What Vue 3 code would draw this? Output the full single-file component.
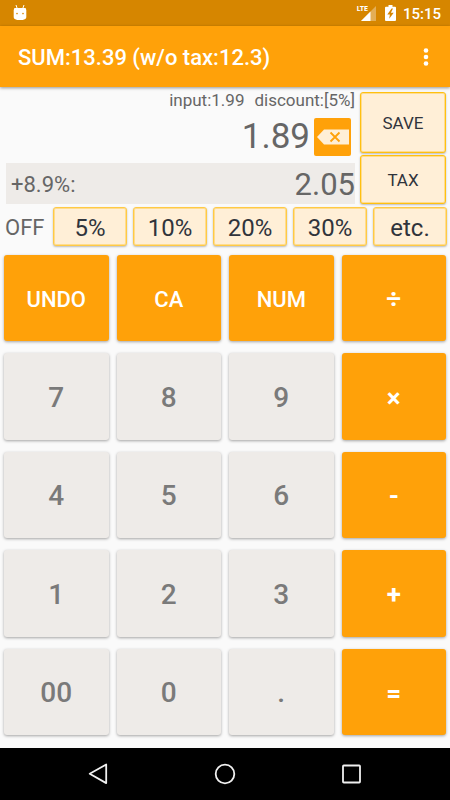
<script setup>
const discounts = ['5%', '10%', '20%', '30%', 'etc.']
const keys = [
  { label: 'UNDO', kind: 'command' },
  { label: 'CA', kind: 'command' },
  { label: 'NUM', kind: 'command' },
  { label: '÷', kind: 'operator' },
  { label: '7', kind: 'digit' },
  { label: '8', kind: 'digit' },
  { label: '9', kind: 'digit' },
  { label: '×', kind: 'operator' },
  { label: '4', kind: 'digit' },
  { label: '5', kind: 'digit' },
  { label: '6', kind: 'digit' },
  { label: '-', kind: 'operator' },
  { label: '1', kind: 'digit' },
  { label: '2', kind: 'digit' },
  { label: '3', kind: 'digit' },
  { label: '+', kind: 'operator' },
  { label: '00', kind: 'digit' },
  { label: '0', kind: 'digit' },
  { label: '.', kind: 'digit' },
  { label: '=', kind: 'operator' }
]
</script>

<template>
  <div class="screen">
    <div class="status">
      <svg class="android" width="14" height="17" viewBox="0 0 14 17">
        <path d="M3 1l1.2 3.4M11 1L9.8 4.4" stroke="#fff" stroke-width="1" fill="none" />
        <path d="M1.4 4h11.2l.7 2v7.2Q13.300 16 7 16T.7 13.200V6z" fill="#fff" />
        <circle cx="4" cy="9.600" r=".8" fill="#d68600" />
        <circle cx="10" cy="9.600" r=".8" fill="#d68600" />
      </svg>
      <div class="indicators">
        <div class="network">
          <span class="lte">LTE</span>
          <svg width="15" height="15" viewBox="0 0 15 15">
            <path d="M15 0v15H0z" fill="#e3ae56" />
            <path d="M9.500 5.500V15H0z" fill="#fff" />
          </svg>
        </div>
        <svg width="11" height="16" viewBox="0 0 11 16">
          <path d="M3.500 0h4v1.700H10q1 0 1 1V15q0 1-1 1H1q-1 0-1-1V2.700q0-1 1-1h2.500z" fill="#fff" />
          <path d="M6.600 3.600L2.300 9.400h2.600L4.200 13.800l4.500-6H5.900L8 3.600z" fill="#d68600" />
        </svg>
        <span class="clock">15:15</span>
      </div>
    </div>

    <header class="appbar">
      <h1>SUM:13.39 (w/o tax:12.3)</h1>
      <button class="more" aria-label="More options">
        <svg width="6" height="20" viewBox="0 0 6 20" fill="#fff">
          <circle cx="3" cy="3.500" r="2.300" />
          <circle cx="3" cy="10" r="2.300" />
          <circle cx="3" cy="16.500" r="2.300" />
        </svg>
      </button>
    </header>

    <main>
      <section class="display">
        <div class="readout">
          <div class="note"><span>input:1.99</span><span>discount:[5%]</span></div>
          <div class="entry">
            <output>1.89</output>
            <button class="erase" aria-label="Backspace">
              <svg width="32" height="16" viewBox="0 0 32 16">
                <path d="M0 8L7 .5h25v15H7z" fill="#ffefd6" />
                <path d="M13.500 3.500l9 9M22.500 3.500l-9 9" stroke="#ffa109" stroke-width="1.800" />
              </svg>
            </button>
          </div>
          <div class="taxed">
            <span class="rate">+8.9%:</span>
            <output>2.05</output>
          </div>
        </div>
        <div class="actions">
          <button class="pale save">SAVE</button>
          <button class="pale tax">TAX</button>
        </div>
      </section>

      <section class="discounts">
        <span class="off">OFF</span>
        <button v-for="d in discounts" :key="d" class="pale">{{ d }}</button>
      </section>

      <section class="keypad">
        <button v-for="k in keys" :key="k.label" class="key" :class="k.kind">{{ k.label }}</button>
      </section>
    </main>

    <nav>
      <button aria-label="Back">
        <svg width="22" height="22" viewBox="0 0 22 22">
          <path d="M19.200 1.500v18.600L2.700 10.800z" />
        </svg>
      </button>
      <button aria-label="Home">
        <svg width="22" height="22" viewBox="0 0 22 22">
          <circle cx="11" cy="11" r="9.300" />
        </svg>
      </button>
      <button aria-label="Recent apps">
        <svg width="22" height="22" viewBox="0 0 22 22">
          <rect x="2" y="2.500" width="17" height="17" rx=".8" />
        </svg>
      </button>
    </nav>
  </div>
</template>

<style>
body {
  margin: 0;
  background: #fafafa;
}
</style>

<style scoped>
.screen {
  display: flex;
  flex-direction: column;
  min-height: 100vh;
  background: #fafafa;
  color: #666;
  font-family: Roboto, "Liberation Sans", sans-serif;
}

button {
  margin: 0;
  padding: 0;
  border: 0;
  background: none;
  font-family: inherit;
  cursor: pointer;
}

svg {
  display: block;
}

.status {
  display: flex;
  align-items: center;
  justify-content: space-between;
  height: 26px;
  padding: 0 9px 0 13px;
  background: #d68600;
  color: #fff;
}

.android {
  margin-bottom: 2px;
}

.indicators {
  display: flex;
  align-items: center;
  gap: 9px;
}

.network {
  position: relative;
}

.lte {
  position: absolute;
  top: -1px;
  right: 8px;
  background: #d68600;
  font-family: "Roboto Condensed", "Liberation Sans Narrow", Roboto, sans-serif;
  font-size: 8px;
  line-height: 8px;
  font-weight: 700;
}

.clock {
  margin-left: -2px;
  padding-top: 2px;
  font-size: 15px;
  line-height: 24px;
  font-weight: 500;
}

.appbar {
  display: flex;
  align-items: center;
  justify-content: space-between;
  height: 61px;
  padding: 0 21px 0 18px;
  background: #ffa109;
  box-shadow: 0 1px 3px rgba(0, 0, 0, 0.4);
}

h1 {
  margin: 2px 0 0;
  color: #fff;
  font-size: 22px;
  line-height: 28px;
  font-weight: 500;
}

main {
  display: flex;
  flex: 1;
  flex-direction: column;
}

.display {
  display: flex;
  gap: 5px;
  padding: 4px 4px 0 6px;
}

.readout {
  flex: 1;
}

.note {
  display: flex;
  justify-content: flex-end;
  gap: 10px;
  font-size: 17px;
  line-height: 19px;
}

.entry {
  display: flex;
  align-items: center;
  justify-content: flex-end;
  gap: 4px;
  height: 53px;
  padding-right: 4px;
  font-size: 35px;
}

.erase {
  display: grid;
  place-items: center;
  width: 37px;
  height: 38px;
  border-radius: 2px;
  background: #ffa109;
}

.taxed {
  display: flex;
  align-items: center;
  justify-content: space-between;
  height: 39px;
  padding: 2px 0 0 5px;
  background: #eeebe8;
  font-size: 31px;
}

.rate {
  font-size: 22px;
}

.actions {
  display: flex;
  flex-direction: column;
  gap: 2px;
  width: 86px;
  padding-top: 1px;
}

.pale {
  border: 1px solid #ffca45;
  border-radius: 3px;
  background: #ffefd7;
  box-shadow: inset 0 0 0 1px rgba(255, 202, 69, 0.5), 0 1px 2px rgba(0, 0, 0, 0.25);
  color: #30343c;
}

.save,
.tax {
  border-color: #ffc010;
  font-size: 17px;
}

.save {
  height: 61px;
}

.tax {
  height: 49px;
}

.discounts {
  display: grid;
  grid-template-columns: 42fr repeat(5, 74fr);
  gap: 6px;
  align-items: center;
  padding: 3px 3px 0 5px;
}

.off {
  padding-top: 2px;
  font-size: 22px;
}

.discounts .pale {
  height: 39px;
  padding-top: 2px;
  font-size: 24px;
}

.keypad {
  display: grid;
  flex: 1;
  grid-template-columns: repeat(4, 1fr);
  grid-auto-rows: minmax(48px, 1fr);
  gap: 12px 8px;
  padding: 9px 4px 13px;
}

.key {
  padding-top: 2px;
  border-radius: 3px;
  background: #ffa109;
  box-shadow: 0 1px 3px rgba(0, 0, 0, 0.35);
  color: #fff;
  font-size: 22px;
  font-weight: 500;
}

.operator {
  font-size: 26px;
  font-weight: 700;
}

.digit {
  background: #eeebe8;
  color: #7a7a7a;
  font-size: 28px;
}

nav {
  display: grid;
  grid-template-columns: repeat(3, 127px);
  justify-content: center;
  height: 52px;
  background: #000;
}

nav button {
  display: grid;
  place-items: center;
}

nav svg {
  fill: none;
  stroke: #f0f0f0;
  stroke-width: 1.8px;
  stroke-linejoin: round;
}
</style>
